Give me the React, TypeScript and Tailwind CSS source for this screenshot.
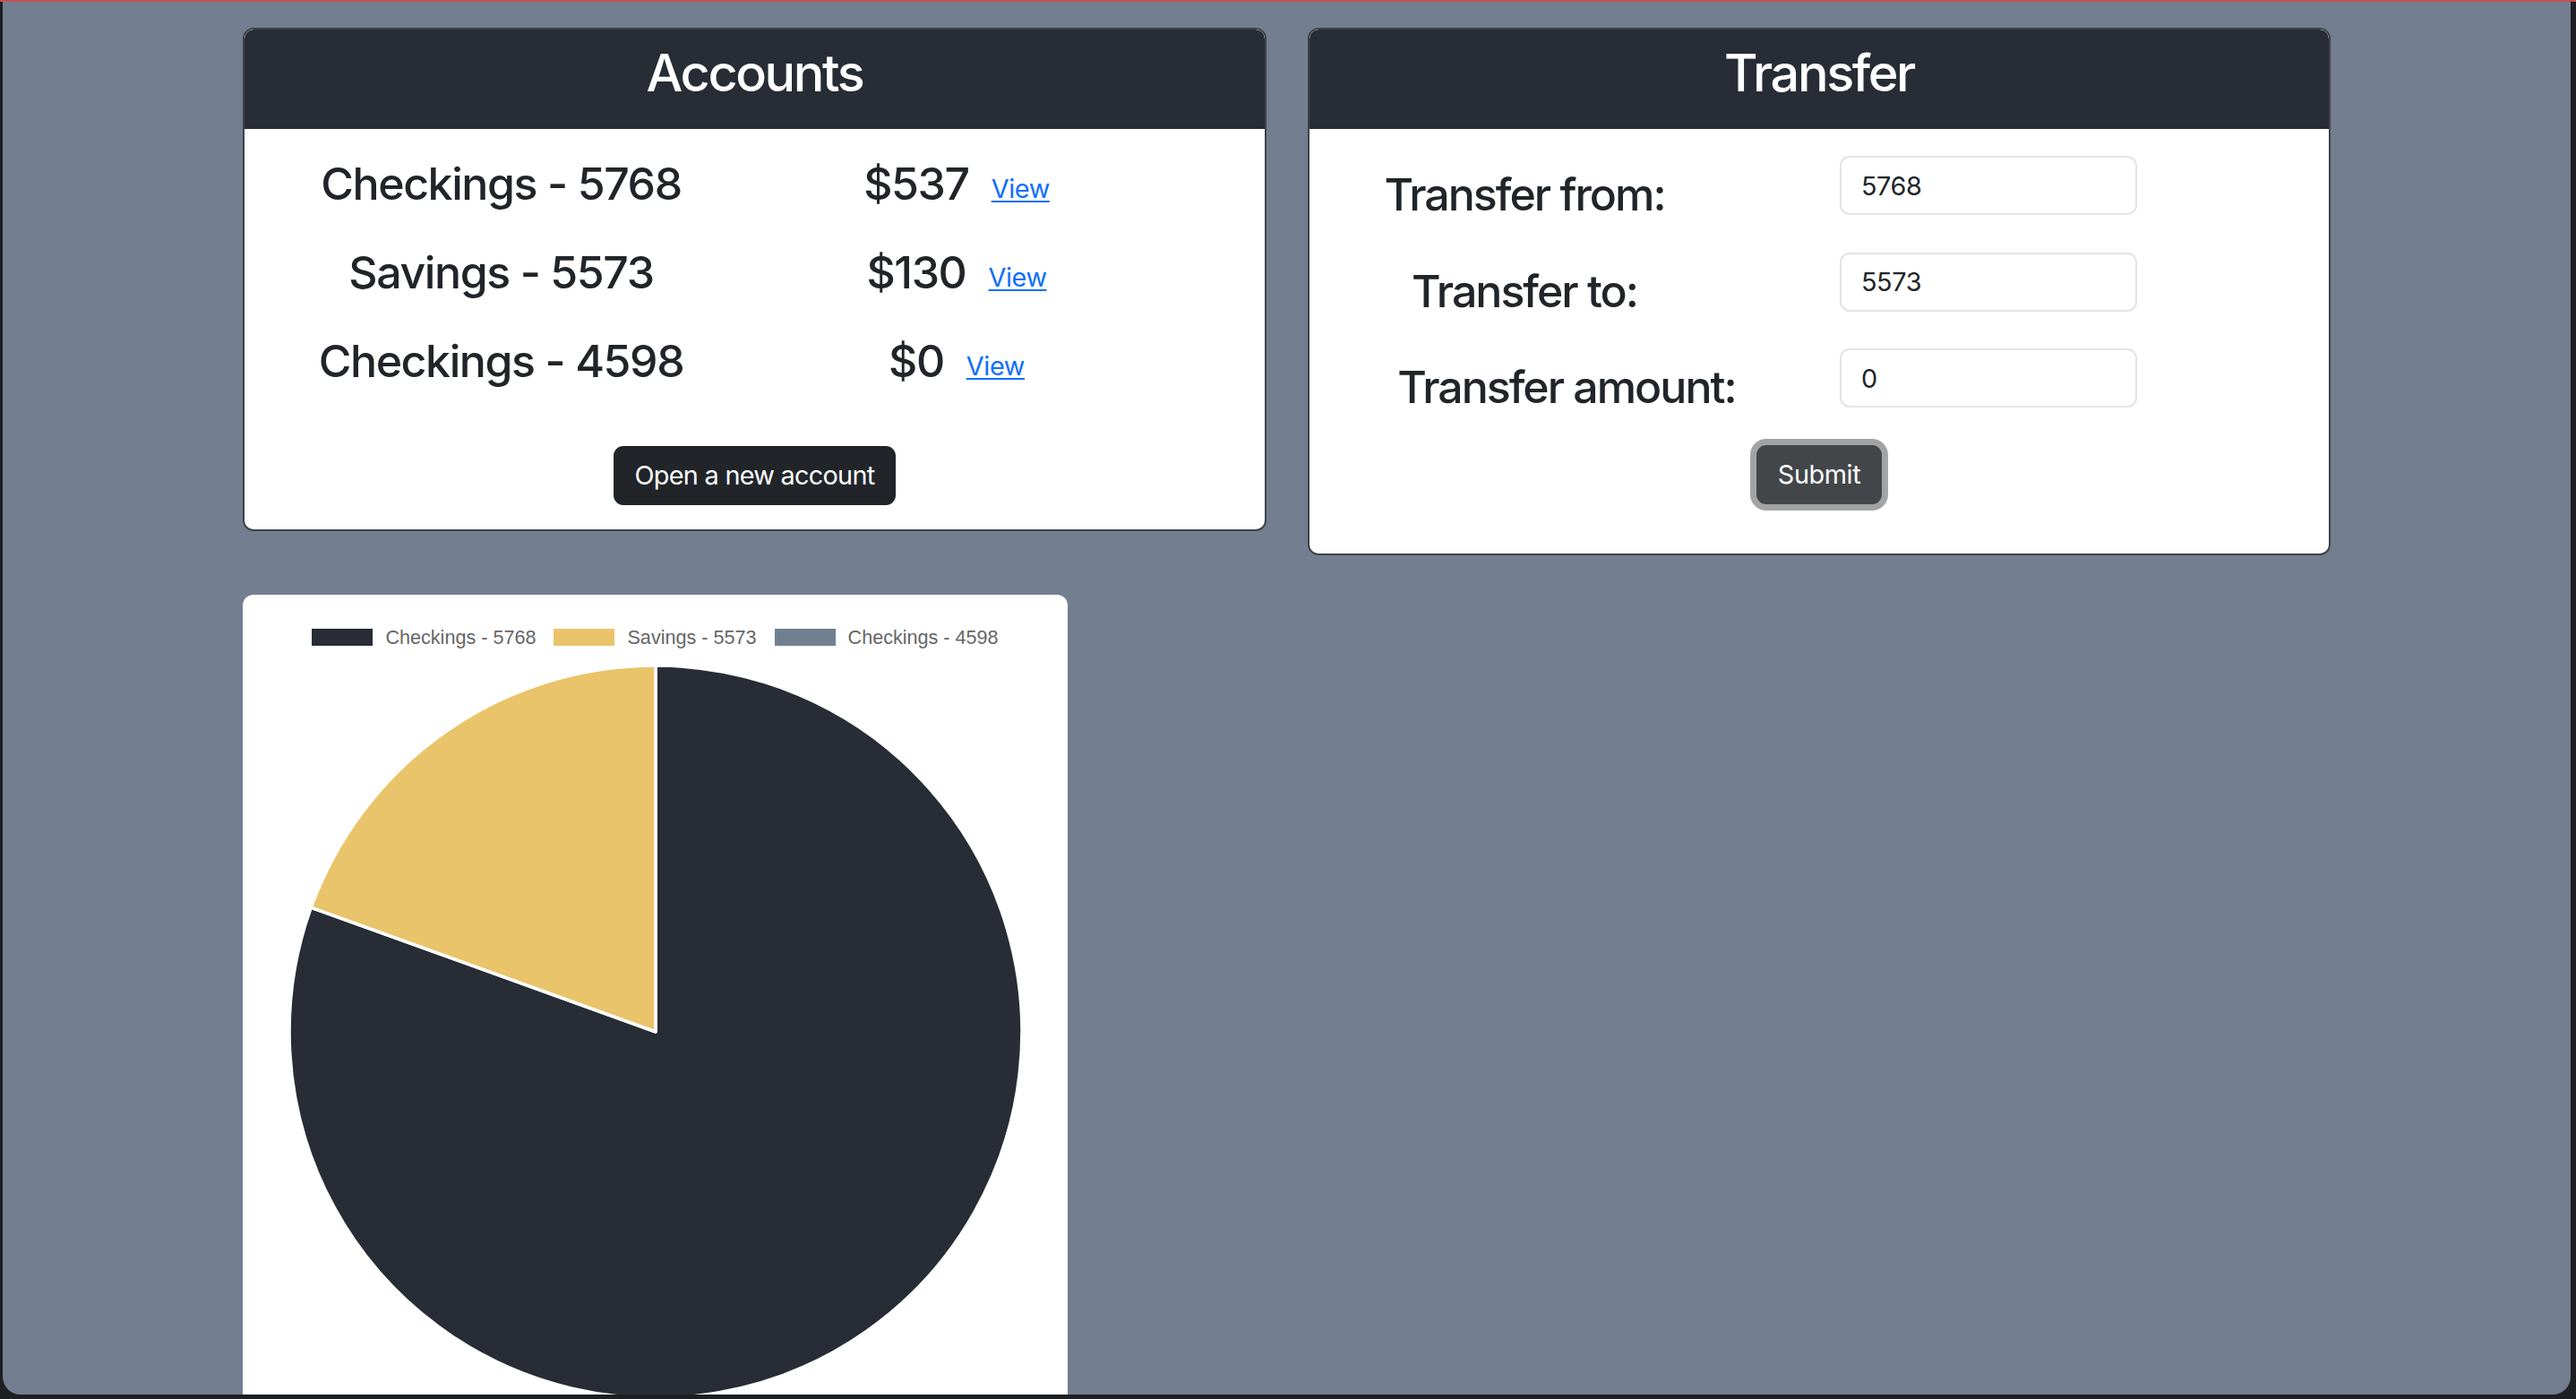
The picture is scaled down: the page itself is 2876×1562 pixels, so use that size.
import React from 'react';

const accounts = [
  { name: 'Checkings - 5768', balance: 537 },
  { name: 'Savings - 5573', balance: 130 },
  { name: 'Checkings - 4598', balance: 0 },
];

const sliceColors = ['#282c34', '#e9c46a', '#708090'];

const CX = 461;
const CY = 420;
const R = 409;

function point(frac: number) {
  const a = frac * Math.PI * 2;
  return [CX + R * Math.sin(a), CY - R * Math.cos(a)];
}

function slicePath(from: number, to: number) {
  const [x1, y1] = point(from);
  const [x2, y2] = point(to);
  const large = to - from > 0.5 ? 1 : 0;
  return `M${CX},${CY} L${x1.toFixed(2)},${y1.toFixed(2)} A${R},${R} 0 ${large} 1 ${x2.toFixed(2)},${y2.toFixed(2)} Z`;
}

function PieCard() {
  const total = accounts.reduce((s, a) => s + a.balance, 0);
  let acc = 0;
  const slices = accounts.map((a, i) => {
    const from = acc / total;
    acc += a.balance;
    const to = acc / total;
    return { from, to, color: sliceColors[i], value: a.balance };
  });

  return (
    <div className="mt-[44px] w-[921px] rounded-t-[12px] bg-white pt-[38px]">
      <div className="flex justify-center gap-[20px] font-['Liberation_Sans',Arial,sans-serif] text-[21.6px] leading-[19px] text-[#666]">
        {accounts.map((a, i) => (
          <div key={a.name} className="flex items-center gap-[14px]">
            <span className="block h-[19px] w-[68px]" style={{ backgroundColor: sliceColors[i] }} />
            <span>{a.name}</span>
          </div>
        ))}
      </div>
      <svg className="mt-[11px] block" width="921" height="830" viewBox="0 0 921 830">
        {slices
          .filter((s) => s.value > 0)
          .map((s, i) => (
            <path key={i} d={slicePath(s.from, s.to)} fill={s.color} stroke="#fff" strokeWidth="3.6" strokeLinejoin="round" />
          ))}
      </svg>
    </div>
  );
}

function CardHeader({ title }: { title: string }) {
  return (
    <div className="h-[111px] rounded-t-[10px] bg-[#282c34] pt-[14px] text-center">
      <h2 className="text-[57.6px] font-medium leading-[69px] tracking-[-2.4px] text-white">{title}</h2>
    </div>
  );
}

function AccountsCard() {
  return (
    <div className="w-[1143px] overflow-hidden rounded-[12px] border-2 border-[#3d424a] bg-white">
      <CardHeader title="Accounts" />
      <div className="flex flex-col pt-[31px] pb-[27px]">
        <div className="flex flex-col gap-[39px]">
          {accounts.map((a) => (
            <div key={a.name} className="flex items-baseline">
              <h3 className="w-[573px] text-center text-[50px] font-medium leading-[60px] tracking-[-1.4px] text-[#212529]">{a.name}</h3>
              <div className="flex w-[444px] items-baseline justify-center gap-[25px]">
                <h3 className="text-[50px] font-medium leading-[60px] tracking-[-1.4px] text-[#212529]">${a.balance}</h3>
                <a
                  href="#"
                  className="relative -top-[2px] text-[28.8px] leading-[42px] tracking-[-0.4px] text-[#0d6efd] underline decoration-2 underline-offset-[3px]"
                >
                  View
                </a>
              </div>
            </div>
          ))}
        </div>
        <button className="mx-auto mt-[65px] h-[66px] rounded-[11px] bg-[#212529] px-[24px] text-[28.8px] leading-[42px] tracking-[-0.7px] text-white">
          Open a new account
        </button>
      </div>
    </div>
  );
}

function TransferCard() {
  const rows = [
    { label: 'Transfer from:', value: '5768', shift: '' },
    { label: 'Transfer to:', value: '5573', shift: '' },
    { label: 'Transfer amount:', value: '0', shift: 'pl-[94px]' },
  ];
  return (
    <div className="w-[1142px] overflow-hidden rounded-[12px] border-2 border-[#3d424a] bg-white">
      <CardHeader title="Transfer" />
      <div className="flex flex-col gap-[41.5px] pt-[30px] pb-[55px]">
        {rows.map((r) => (
          <div key={r.label} className="flex h-[66px] items-start">
            <label
              className={`mt-[13px] w-[480px] whitespace-nowrap text-center text-[50px] font-medium leading-[60px] tracking-[-2px] text-[#212529] ${r.shift}`}
            >
              {r.label}
            </label>
            <input
              readOnly
              value={r.value}
              className="ml-[112px] h-[66px] w-[332px] rounded-[11px] border-2 border-[#e2e4e9] bg-white px-[22px] text-[28.8px] tracking-[-0.4px] text-[#212529] outline-none"
            />
          </div>
        ))}
        <button className="self-center h-[66px] rounded-[11px] bg-[#424649] px-[24px] text-[28.8px] leading-[42px] tracking-[-0.4px] text-white ring-[7px] ring-[#a1a3a5]">
          Submit
        </button>
      </div>
    </div>
  );
}

export default function App() {
  return (
    <div className="h-[1562px] w-full overflow-hidden bg-[#1e1f22] font-['Inter','Noto_Sans',sans-serif]">
      <div className="h-[2px] w-full bg-[#c05252]" />
      <div className="ml-[3px] mr-[6px] h-[1555px] overflow-hidden rounded-b-[20px] bg-[#737f90] pl-[268px] pt-[29px]">
        <div className="flex items-start gap-[46px]">
          <AccountsCard />
          <TransferCard />
        </div>
        <PieCard />
      </div>
    </div>
  );
}
